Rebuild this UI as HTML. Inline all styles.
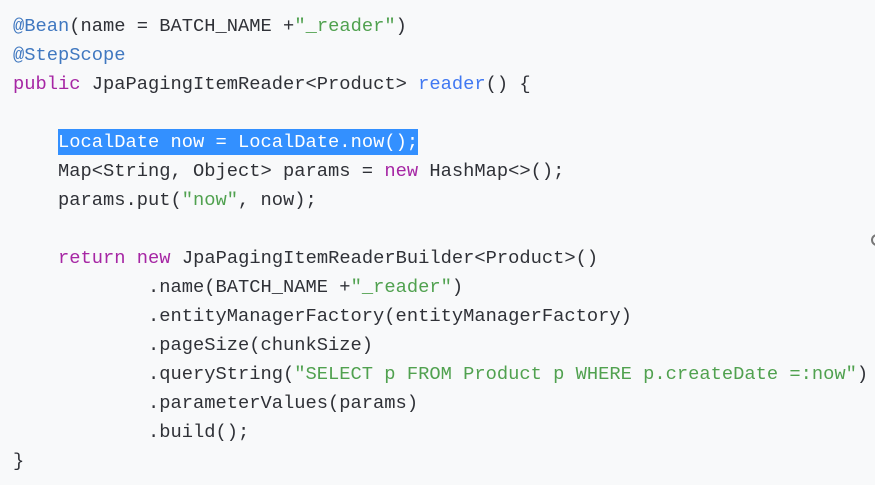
<!DOCTYPE html>
<html><head><meta charset="utf-8"><style>
html,body{margin:0;padding:0;background:#f8f9fa;width:875px;height:485px;overflow:hidden;position:relative}
pre{margin:0;position:absolute;left:13px;top:12px;font-family:"Liberation Mono",monospace;font-size:18.75px;line-height:29px;color:#2f3137}
.a{color:#4078c0}.k{color:#a626a4}.s{color:#50a14f}.f{color:#4078f2}
.h{background:#3390ff;color:#fff;padding:2px 0}
.c{position:absolute;width:8px;height:8px;border:2px solid #777;border-radius:50%}
</style></head><body>
<pre><span class="a">@Bean</span>(name = BATCH_NAME +<span class="s">"_reader"</span>)
<span class="a">@StepScope</span>
<span class="k">public</span> JpaPagingItemReader&lt;Product&gt; <span class="f">reader</span>() {

    <span class="h">LocalDate now = LocalDate.now();</span>
    Map&lt;String, Object&gt; params = <span class="k">new</span> HashMap&lt;&gt;();
    params.put(<span class="s">"now"</span>, now);

    <span class="k">return</span> <span class="k">new</span> JpaPagingItemReaderBuilder&lt;Product&gt;()
            .name(BATCH_NAME +<span class="s">"_reader"</span>)
            .entityManagerFactory(entityManagerFactory)
            .pageSize(chunkSize)
            .queryString(<span class="s">"SELECT p FROM Product p WHERE p.createDate =:now"</span>)
            .parameterValues(params)
            .build();
}</pre>
<div class="c" style="left:871px;top:234px"></div>
</body></html>
